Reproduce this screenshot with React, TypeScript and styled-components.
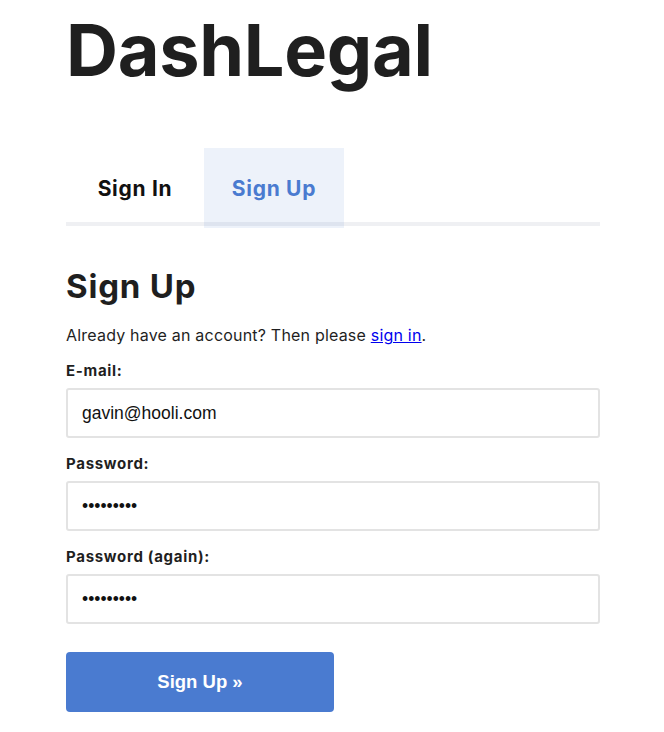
import React from "react";
import styled, { createGlobalStyle } from "styled-components";

const Global = createGlobalStyle`
  html, body { margin: 0; padding: 0; background: #fff; }
  body { font-family: Inter, "DejaVu Sans", sans-serif; color: #1f1f1f; }
`;

const Page = styled.div`
  width: 534px;
  padding: 0 0 20px 66px;
`;

const Brand = styled.h1`
  margin: 0;
  padding-top: 10px;
  font-family: Inter, sans-serif;
  font-weight: 700;
  font-size: 72px;
  line-height: 80px;
  letter-spacing: -0.3px;
  color: #1f1f1f;
`;

const TabList = styled.div`
  display: flex;
  margin-top: 58px;
  border-bottom: 4px solid #eff0f3;
`;

const Tab = styled.div<{ $active?: boolean }>`
  width: ${(p) => (p.$active ? 140 : 138)}px;
  height: 80px;
  margin-bottom: -6px;
  display: flex;
  align-items: center;
  justify-content: center;
  font-family: Inter, sans-serif;
  font-weight: 700;
  font-size: 21px;
  letter-spacing: 0.7px;
  color: ${(p) => (p.$active ? "#4a7bd0" : "#111")};
  background: ${(p) => (p.$active ? "rgba(74,123,208,0.1)" : "transparent")};
`;

const Heading = styled.h2`
  margin: 40px 0 0;
  font-family: Inter, sans-serif;
  font-weight: 700;
  font-size: 33px;
  line-height: 40px;
  letter-spacing: 0.8px;
  color: #1f1f1f;
`;

const Lead = styled.p`
  margin: 19px 0 0;
  font-size: 16px;
  line-height: 20px;
  letter-spacing: 0.2px;
  color: #1f1f1f;
  a { color: #0000ee; text-decoration: underline; }
`;

const Form = styled.form`
  display: flex;
  flex-direction: column;
`;

const Label = styled.label`
  display: block;
  margin-top: 17px;
  font-size: 15px;
  font-weight: 700;
  line-height: 18px;
  letter-spacing: 0.7px;
  color: #1f1f1f;
`;

const Input = styled.input`
  box-sizing: border-box;
  width: 534px;
  height: 50px;
  margin-top: 8px;
  padding: 0 14px;
  border: 2px solid #e3e3e3;
  border-radius: 3px;
  font-family: "Liberation Sans", Arial, sans-serif;
  font-size: 17.5px;
  color: #111;
  outline: none;
`;

const Button = styled.button`
  width: 268px;
  height: 60px;
  margin-top: 28px;
  border: none;
  border-radius: 4px;
  background: #4a7bd0;
  color: #fff;
  font-family: "Liberation Sans", Arial, sans-serif;
  font-weight: 700;
  font-size: 18.5px;
  cursor: pointer;
`;

export default function App() {
  return (
    <Page>
      <Global />
      <Brand>DashLegal</Brand>
      <TabList>
        <Tab>Sign In</Tab>
        <Tab $active>Sign Up</Tab>
      </TabList>
      <Heading>Sign Up</Heading>
      <Lead>
        Already have an account? Then please <a href="#">sign in</a>.
      </Lead>
      <Form onSubmit={(e) => e.preventDefault()}>
        <Label htmlFor="email">E-mail:</Label>
        <Input id="email" type="email" defaultValue="gavin@hooli.com" />
        <Label htmlFor="pw1">Password:</Label>
        <Input id="pw1" type="password" defaultValue="secretpwd" />
        <Label htmlFor="pw2">Password (again):</Label>
        <Input id="pw2" type="password" defaultValue="secretpwd" />
        <div>
          <Button type="submit">Sign Up »</Button>
        </div>
      </Form>
    </Page>
  );
}
